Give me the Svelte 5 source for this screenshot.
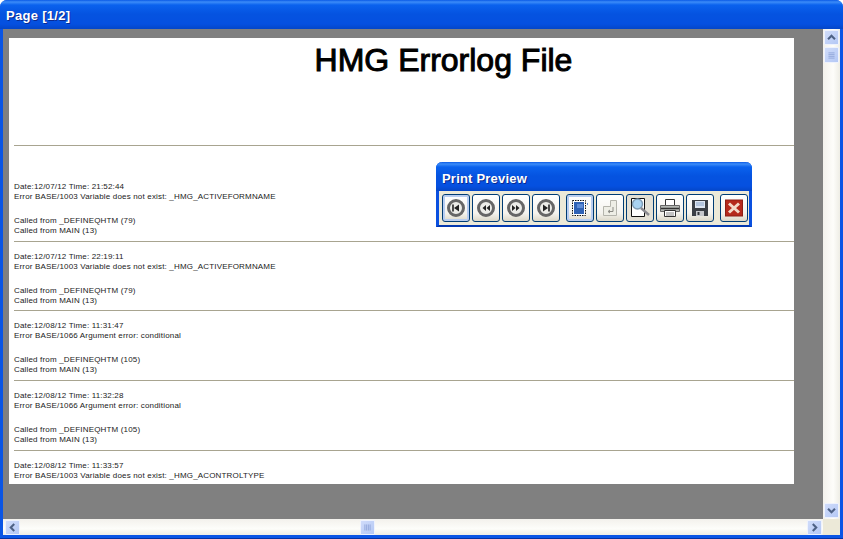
<script>
  const entries = [
    { date: "Date:12/07/12 Time: 21:52:44", err: "Error BASE/1003 Variable does not exist: _HMG_ACTIVEFORMNAME", from: "Called from _DEFINEQHTM (79)" },
    { date: "Date:12/07/12 Time: 22:19:11", err: "Error BASE/1003 Variable does not exist: _HMG_ACTIVEFORMNAME", from: "Called from _DEFINEQHTM (79)" },
    { date: "Date:12/08/12 Time: 11:31:47", err: "Error BASE/1066 Argument error: conditional", from: "Called from _DEFINEQHTM (105)" },
    { date: "Date:12/08/12 Time: 11:32:28", err: "Error BASE/1066 Argument error: conditional", from: "Called from _DEFINEQHTM (105)" },
    { date: "Date:12/08/12 Time: 11:33:57", err: "Error BASE/1003 Variable does not exist: _HMG_ACONTROLTYPE", from: "" }
  ];
</script>

<div class="window">
  <div class="titlebar">Page [1/2]</div>
  <div class="frame">
    <div class="viewport">
      <div class="page">
        <h1>HMG Errorlog File</h1>
        <div class="rule"></div>
        {#each entries as e}
          <div class="entry">
            <div>{e.date}</div>
            <div>{e.err}</div>
            {#if e.from}
              <div class="gap">{e.from}</div>
              <div>Called from MAIN (13)</div>
            {/if}
          </div>
        {/each}
      </div>
    </div>

    <div class="vbar">
      <div class="sbtn">
        <svg width="15" height="15" viewBox="0 0 15 15"><path d="M3.500 9.500 7.500 5.500 11.500 9.500" fill="none" stroke="#4d6185" stroke-width="2.400"/></svg>
      </div>
      <div class="sbtn thumb">
        <svg width="15" height="15" viewBox="0 0 15 15"><path d="M4 4.500h7M4 6.500h7M4 8.500h7M4 10.500h7" stroke="#8fa4d8" stroke-width="1"/></svg>
      </div>
      <div class="spacer"></div>
      <div class="sbtn">
        <svg width="15" height="15" viewBox="0 0 15 15"><path d="M3.500 5.500 7.500 9.500 11.500 5.500" fill="none" stroke="#4d6185" stroke-width="2.400"/></svg>
      </div>
    </div>

    <div class="hbar">
      <div class="sbtn">
        <svg width="15" height="15" viewBox="0 0 15 15"><path d="M9.500 3.500 5.500 7.500 9.500 11.500" fill="none" stroke="#4d6185" stroke-width="2.400"/></svg>
      </div>
      <div class="hthumb sbtn thumb">
        <svg width="15" height="15" viewBox="0 0 15 15"><path d="M4.500 4v7M6.500 4v7M8.500 4v7M10.500 4v7" stroke="#8fa4d8" stroke-width="1"/></svg>
      </div>
      <div class="spacer"></div>
      <div class="sbtn">
        <svg width="15" height="15" viewBox="0 0 15 15"><path d="M5.500 3.500 9.500 7.500 5.500 11.500" fill="none" stroke="#4d6185" stroke-width="2.400"/></svg>
      </div>
    </div>
    <div class="corner"></div>
  </div>

  <div class="palette">
    <div class="ptitle">Print Preview</div>
    <div class="tools">
      <div class="tbtn on">
        <svg width="20" height="20" viewBox="0 0 20 20"><circle cx="10" cy="10" r="7.500" fill="#ecece8" stroke="#666" stroke-width="3"/><path d="M7 6.500v7" stroke="#222" stroke-width="1.600"/><path d="M13 6.500v7L8 10z" fill="#222"/></svg>
      </div>
      <div class="tbtn">
        <svg width="20" height="20" viewBox="0 0 20 20"><circle cx="10" cy="10" r="7.500" fill="#ecece8" stroke="#666" stroke-width="3"/><path d="M10 7v6L6.500 10zM14 7v6L10.500 10z" fill="#222"/></svg>
      </div>
      <div class="tbtn">
        <svg width="20" height="20" viewBox="0 0 20 20"><circle cx="10" cy="10" r="7.500" fill="#ecece8" stroke="#666" stroke-width="3"/><path d="M6 7v6L9.500 10zM10 7v6L13.500 10z" fill="#222"/></svg>
      </div>
      <div class="tbtn">
        <svg width="20" height="20" viewBox="0 0 20 20"><circle cx="10" cy="10" r="7.500" fill="#ecece8" stroke="#666" stroke-width="3"/><path d="M13 6.500v7" stroke="#222" stroke-width="1.600"/><path d="M7 6.500v7L12 10z" fill="#222"/></svg>
      </div>
      <div class="tbtn on sep">
        <svg width="20" height="20" viewBox="0 0 20 20"><rect x="2.500" y="2.500" width="13" height="15" fill="#fff" stroke="#111" stroke-dasharray="1.500 1"/><rect x="4" y="4" width="10" height="12" fill="#2f62b5"/><path d="M7 6h6v4H7z" fill="#5d8bd6"/><path d="M17.500 5v2" stroke="#5d8bd6"/></svg>
      </div>
      <div class="tbtn">
        <svg width="20" height="20" viewBox="0 0 20 20"><path d="M10.500 2.500h6v15h-13v-9h7z" fill="#eeeee6" stroke="#b4b4ac"/><path d="M13 9v4.500H8.500M10 12l-2 1.500 2 1.500" fill="none" stroke="#8a8a84"/></svg>
      </div>
      <div class="tbtn pressed">
        <svg width="24" height="22" viewBox="0 0 24 22"><path d="M3.500 1.500h13v18h-13z" fill="#fff" stroke="#111"/><circle cx="9.500" cy="7" r="5" fill="#a9d3f2" stroke="#7f9cb4" stroke-width="1.400"/><path d="M13 11l8 7" stroke="#8a8a90" stroke-width="2.400"/></svg>
      </div>
      <div class="tbtn">
        <svg width="22" height="20" viewBox="0 0 22 20"><path d="M6.500 1.500h9v6h-9z" fill="#fff" stroke="#333"/><path d="M1.500 7.500h19v6h-19z" fill="#b4b8b4" stroke="#666"/><path d="M2 10.500h18" stroke="#333" stroke-width="1.500"/><path d="M5.500 12.500h11v6h-11z" fill="#fff" stroke="#333"/><path d="M7 15h8M7 17h8" stroke="#888"/></svg>
      </div>
      <div class="tbtn">
        <svg width="20" height="20" viewBox="0 0 20 20"><path d="M2 2h16v16H2z" fill="#3b3f45"/><path d="M5 3h10v7H5z" fill="#dfe7f2"/><path d="M6 5h8M6 7h8" stroke="#8aa4c8"/><path d="M6 13h8v5H6z" fill="#c6c8cc"/><path d="M7.500 14h2v3h-2z" fill="#33363a"/></svg>
      </div>
      <div class="tbtn close">
        <svg width="20" height="20" viewBox="0 0 20 20"><rect x="1.500" y="2" width="17" height="16" fill="#b5291c" stroke="#8d1f14"/><path d="M5 5.500 15 14.500M15 5.500 5 14.500" stroke="#f3d9c9" stroke-width="3"/></svg>
      </div>
    </div>
  </div>
</div>

<style>
  :global(body) {
    margin: 0;
    background: #fff;
  }

  .window {
    position: relative;
    width: 843px;
    height: 539px;
    display: flex;
    flex-direction: column;
    background: #0a55e5;
    box-shadow: inset 0 -1px #0332a5;
    border-radius: 7px 7px 0 0;
    overflow: hidden;
    font-family: "Liberation Sans", sans-serif;
  }

  .titlebar {
    height: 29px;
    box-sizing: border-box;
    padding: 7px 0 0 6px;
    background: linear-gradient(#0a5ae6 0, #3c8cf8 2px, #0a62ee 5px, #0553e0 14px, #0550e0 24px, #0446c8 29px);
    color: #fff;
    font: bold 13px/17px "Liberation Sans", sans-serif;
    letter-spacing: 0.3px;
    text-shadow: 1px 1px #0a2a90;
  }

  .frame {
    flex: 1;
    min-height: 0;
    margin: 0 3px 4px 3px;
    display: grid;
    grid-template-columns: 1fr 17px;
    grid-template-rows: 1fr 16px;
  }

  .viewport {
    background: #808080;
    padding: 9px 0 0 6px;
    overflow: hidden;
    min-height: 0;
  }

  .page {
    width: 785px;
    height: 446px;
    background: #fff;
    overflow: hidden;
  }

  h1 {
    margin: 0;
    padding: 4px 0 0 84px;
    height: 107px;
    box-sizing: border-box;
    text-align: center;
    font: 500 32px/36px "Liberation Sans", sans-serif;
    color: #000;
    -webkit-text-stroke: 1px #000;
  }

  .rule {
    height: 1px;
    margin-left: 5px;
    background: #a8a490;
  }

  .entry {
    box-sizing: border-box;
    height: 69.650px;
    margin-left: 5px;
    padding-top: 10px;
    border-bottom: 1px solid #a8a490;
    font-size: 8px;
    line-height: 10px;
    color: #222;
    letter-spacing: 0.170px;
    white-space: nowrap;
  }

  .rule + .entry {
    height: 95.600px;
    padding-top: 36px;
  }

  .gap {
    margin-top: 14px;
  }

  .vbar {
    display: flex;
    flex-direction: column;
    padding: 1px 0;
    background: linear-gradient(90deg, #f3f1ec, #fdfdfa 60%, #eeede5);
    min-height: 0;
  }

  .hbar {
    display: flex;
    padding: 1px 1px 0 1px;
    background: linear-gradient(#f3f1ec, #fdfdfa 60%, #eeede5);
  }

  .spacer {
    flex: 1;
  }

  .corner {
    background: #ece9d8;
  }

  .sbtn {
    width: 15px;
    height: 15px;
    margin-left: 1px;
    border: 1px solid #eef2fd;
    box-sizing: border-box;
    background: linear-gradient(135deg, #d0dcfa, #b4c8f5);
    display: flex;
    align-items: center;
    justify-content: center;
    flex: none;
    border-radius: 1px;
    overflow: hidden;
  }

  .vbar .thumb {
    height: 16px;
    margin-top: 2px;
  }

  .hthumb {
    margin-left: 340px;
  }

  .palette {
    position: absolute;
    left: 436px;
    top: 162px;
    width: 316px;
    height: 65px;
    box-sizing: border-box;
    border-radius: 6px 6px 0 0;
    border: solid #0a50e0;
    border-width: 0 3px 2px 3px;
    border-bottom-color: #0338b0;
    background: #ece9d8;
    display: flex;
    flex-direction: column;
  }

  .ptitle {
    height: 29px;
    margin: 0 -3px;
    box-sizing: border-box;
    padding: 8px 0 0 6px;
    border-radius: 6px 6px 0 0;
    background: linear-gradient(#0a5ae6 0, #3c8cf8 2px, #0a62ee 5px, #0553e0 14px, #0550e0 24px, #0446c8 29px);
    color: #fff;
    font: bold 13px/17px "Liberation Sans", sans-serif;
    letter-spacing: 0.2px;
    text-shadow: 1px 1px #0a2a90;
  }

  .tools {
    display: flex;
    gap: 2px;
    padding: 3px 0 0 3px;
  }

  .tbtn {
    width: 28px;
    height: 28px;
    box-sizing: border-box;
    border: 1px solid #003c74;
    border-radius: 3px;
    background: linear-gradient(#fff, #f4f3ee 70%, #dcd8c8);
    display: flex;
    align-items: center;
    justify-content: center;
    flex: none;
    overflow: hidden;
  }

  .tbtn.on {
    box-shadow: inset 0 0 0 2px #b8cdf0;
  }

  .tbtn.pressed {
    background: #e4e1d6;
  }

  .tbtn.sep,
  .tbtn.close {
    margin-left: 4px;
  }
</style>
